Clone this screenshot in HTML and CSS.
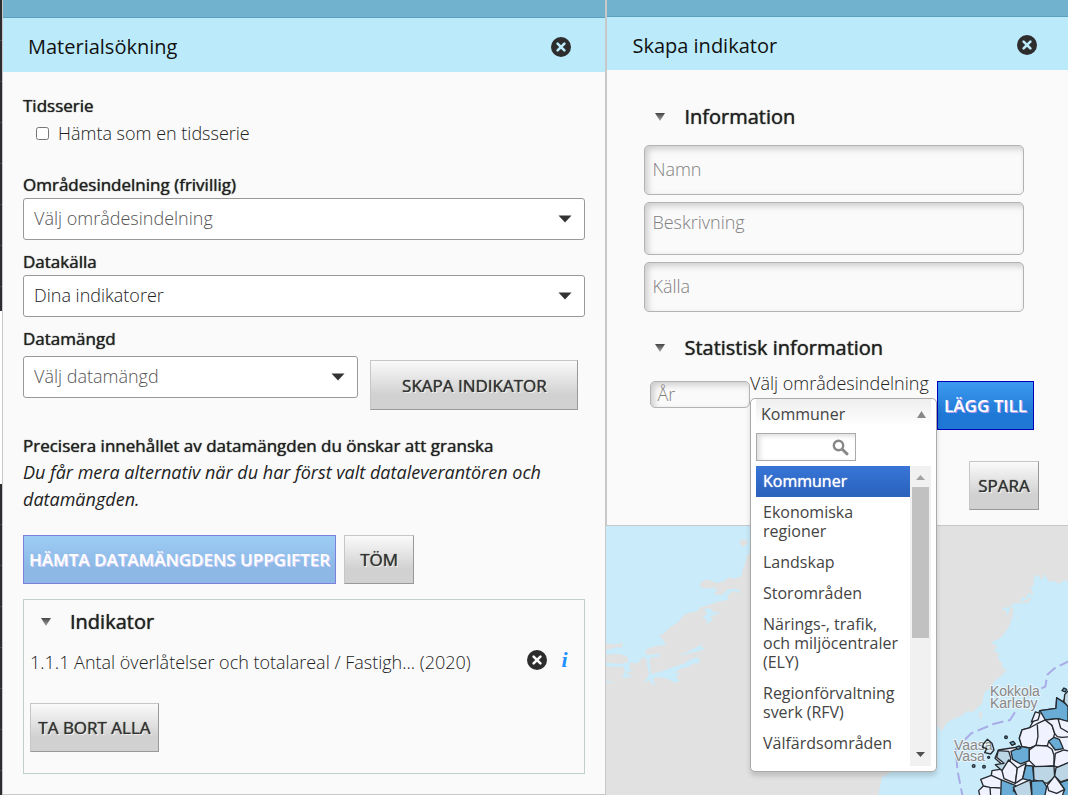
FILE: index.html
```html
<!DOCTYPE html>
<html lang="sv">
<head>
<meta charset="utf-8">
<title>Materialsökning</title>
<link rel="stylesheet" href="styles.css">
</head>
<body>
<svg class="defs" aria-hidden="true">
  <symbol id="close" viewBox="0 0 20 20"><circle cx="10" cy="10" r="10" fill="#2d2d2d"/><path d="M6.6 6.6l6.8 6.8M13.4 6.6l-6.8 6.8" stroke="currentColor" stroke-width="2.6" stroke-linecap="round"/></symbol>
  <symbol id="caret" viewBox="0 0 14 8"><path d="M0.5 0.5h13L7 7.5z" fill="#333"/></symbol>
  <linearGradient id="fade" x1="0" y1="0" x2="0" y2="1"><stop offset="0" stop-color="#444"/><stop offset="1" stop-color="#aaa"/></linearGradient>
  <symbol id="fold" viewBox="0 0 10 8"><path d="M0 0h10L5 8z" fill="url(#fade)"/></symbol>
</svg>
<div class="app">
  <div class="rail"><div class="rail-top"></div><div class="rail-gap"></div><div class="rail-bottom"></div></div>

  <section class="panel search">
    <div class="grip"></div>
    <header class="head">
      <h2 class="title">Materialsökning</h2>
      <button class="icon-btn" type="button" aria-label="Stäng"><svg class="close"><use href="#close"/></svg></button>
    </header>
    <div class="search-body">
      <div class="label">Tidsserie</div>
      <label class="check"><input type="checkbox">Hämta som en tidsserie</label>

      <label class="label" for="area">Områdesindelning (frivillig)</label>
      <div class="select-wrap">
        <select id="area" class="select muted"><option>Välj områdesindelning</option></select>
        <svg class="caret"><use href="#caret"/></svg>
      </div>
      <label class="label next" for="source">Datakälla</label>
      <div class="select-wrap">
        <select id="source" class="select"><option>Dina indikatorer</option></select>
        <svg class="caret"><use href="#caret"/></svg>
      </div>
      <label class="label next" for="dataset">Datamängd</label>
      <div class="dataset-row">
        <div class="select-wrap dataset">
          <select id="dataset" class="select muted"><option>Välj datamängd</option></select>
          <svg class="caret"><use href="#caret"/></svg>
        </div>
        <button class="btn create" type="button">SKAPA INDIKATOR</button>
      </div>

      <div class="label refine">Precisera innehållet av datamängden du önskar att granska</div>
      <p class="hint">Du får mera alternativ när du har först valt dataleverantören och datamängden.</p>
      <div class="actions">
        <button class="btn primary off" type="button" disabled>HÄMTA DATAMÄNGDENS UPPGIFTER</button>
        <button class="btn clear" type="button">TÖM</button>
      </div>

      <div class="result">
        <h3 class="fold-head"><button class="fold-btn" type="button"><svg class="fold"><use href="#fold"/></svg>Indikator</button></h3>
        <div class="result-row">
          <span class="result-name">1.1.1 Antal överlåtelser och totalareal / Fastigh... (2020)</span>
          <button class="icon-btn" type="button" aria-label="Ta bort"><svg class="close light"><use href="#close"/></svg></button>
          <button class="icon-btn info" type="button">i</button>
        </div>
        <button class="btn remove" type="button">TA BORT ALLA</button>
      </div>
    </div>
  </section>

  <div class="side">
    <section class="panel indicator">
      <div class="grip"></div>
      <header class="head">
        <h2 class="title">Skapa indikator</h2>
        <button class="icon-btn" type="button" aria-label="Stäng"><svg class="close"><use href="#close"/></svg></button>
      </header>
      <div class="indicator-body">
        <h3 class="fold-head"><button class="fold-btn" type="button"><svg class="fold"><use href="#fold"/></svg>Information</button></h3>
        <div class="fields">
          <input class="field" type="text" placeholder="Namn" aria-label="Namn">
          <textarea class="field area" placeholder="Beskrivning" aria-label="Beskrivning"></textarea>
          <input class="field" type="text" placeholder="Källa" aria-label="Källa">
        </div>
        <h3 class="fold-head"><button class="fold-btn" type="button"><svg class="fold"><use href="#fold"/></svg>Statistisk information</button></h3>
        <div class="stat-row">
          <input class="field year" type="text" placeholder="År" aria-label="År">
          <div class="combo">
            <div class="combo-label" id="combo-label">Välj områdesindelning</div>
            <div class="combo-anchor">
              <div class="drop">
                <button class="combo-btn" type="button" aria-labelledby="combo-label">Kommuner<svg class="up" viewBox="0 0 9 7"><path d="M4.500 0L9 7H0z" fill="#888"/></svg></button>
                <div class="find">
                  <input class="find-input" type="text" aria-label="Sök">
                  <svg class="lens" viewBox="0 0 17 17" fill="none" stroke="#888"><circle cx="6.500" cy="6.500" r="4.700" stroke-width="2.400"/><path d="M10.500 10.500l4.500 4.300" stroke-width="3" stroke-linecap="round"/></svg>
                </div>
                <div class="list">
                  <ul class="options">
                    <li class="option on">Kommuner</li>
                    <li class="option">Ekonomiska regioner</li>
                    <li class="option">Landskap</li>
                    <li class="option">Storområden</li>
                    <li class="option">Närings-, trafik, och miljöcentraler (ELY)</li>
                    <li class="option">Regionförvaltning<wbr>sverk (RFV)</li>
                    <li class="option">Välfärdsområden</li>
                  </ul>
                  <div class="scroll">
                    <svg class="tick" viewBox="0 0 9 5"><path d="M4.500 0L9 5H0z" fill="#a3a3a3"/></svg>
                    <div class="thumb"></div>
                    <svg class="tick" viewBox="0 0 9 5"><path d="M0 0h9L4.500 5z" fill="#505050"/></svg>
                  </div>
                </div>
              </div>
            </div>
          </div>
          <button class="btn primary" type="button">LÄGG TILL</button>
        </div>
        <div class="save-row"><button class="btn" type="button">SPARA</button></div>
      </div>
    </section>

    <div class="map">
      <svg class="map-svg" viewBox="606 526 462 269" preserveAspectRatio="xMinYMin slice">
        <rect x="606" y="526" width="462" height="269" fill="#e1e1e1"/>
        <!-- western sea and archipelago -->
        <g transform="translate(600 520) scale(.3333)" fill="#c9ebfa">
          <path d="M0 0H454V95L440 108 436 130 428 150 424 168 404 176 386 172 372 184 352 190 338 184 320 178 300 190 302 202 322 206 340 202 352 212 340 222 364 226 384 208 410 206 436 226 420 216 398 214 382 226 384 240 358 244 334 252 318 258 300 262 292 274 268 278 250 286 238 304 222 314 206 326 190 342 176 346 188 358 198 376 180 376 160 380 140 388 134 402 150 404 178 402 180 410 152 412 148 424 154 462 190 452 222 440 254 430 268 420 294 410 300 430 282 430 264 440 240 446 224 458 242 460 228 468 238 484 226 488 196 474 166 470 158 480 168 496 156 492 148 480 132 490 142 472 148 462 142 440 140 416 128 412 112 430 90 428 88 448 104 450 82 456 86 466 104 466 76 474 66 468 76 454 70 440 40 440 18 438V428L60 432 86 426 82 410 60 402 18 404V390L48 382 66 382 68 368 40 374 18 370Z"/>
          <path d="M228 406L256 400 280 386 300 376 308 366 302 378 314 386 300 392 270 400 250 404ZM312 268L330 264 340 276 362 278 344 284 328 292 340 298 318 314 322 302 308 290 322 282ZM18 484l30 3-30 2ZM338 238l20-6 26-2-20 12Z"/>
          <path d="M418 68l8-10 12 2 5 10-10 8-6 2Z" fill="#e1e1e1"/>
        </g>
        <!-- Gulf of Bothnia -->
        <g transform="translate(930 520) scale(.3333)" stroke-linejoin="round">
          <path fill="#c9ebfa" d="M420 186L404 180 386 192 372 182 358 186 342 162 336 180 322 164 312 172 310 196 302 204 312 226 296 218 288 234 274 232 272 248 246 252 240 262 214 264 228 272 232 290 246 294 238 318 222 342 206 358 184 366 202 380 192 394 206 400 204 416 216 428 218 444 230 450 212 470 196 480 180 504 162 520 158 548 146 560 126 578 114 572 88 590 62 600 46 614 36 634 22 618-30 690-96 740-126 762-144 772-156 830H420Z"/>
          <path d="M232 290l12-30 6 8-4 26M256 280l8 18M270 250l34-18-10 16M148 578l8-2-4 22-4-8Z" fill="#e1e1e1" stroke="#e1e1e1" stroke-width="2"/>
          <path d="M420 422L372 446 352 464 346 500 300 520 266 560 240 600 190 612 124 640 78 686 82 750 98 830" fill="none" stroke="#a9ace8" stroke-width="6" stroke-dasharray="34 14"/>
        </g>
        <g class="place">
          <text x="990" y="696">Kokkola</text><text x="990" y="708">Karleby</text>
          <text x="954" y="750">Vaasa</text><text x="954" y="761">Vasa</text>
        </g>
        <!-- municipalities shaded by class -->
        <g transform="translate(930 520) scale(.3333)" stroke="#252a2e" stroke-width="4" stroke-linejoin="round">
          <path fill="#f0f2ff" d="M420 504L400 545 380 535 378 565 330 572 318 592 305 612 298 624 276 630 268 655 276 680 245 684 205 690 195 715 212 730 210 748 186 752 184 766 152 778 160 798 146 812 150 830H420Z"/>
          <path fill="#69acd5" d="M330 572L378 565 380 533 396 544 414 556V606L384 596 346 600Z"/>
          <path fill="#bcd6e6" d="M420 506L404 524 402 546 420 566Z"/>
          <path fill="#f0f2ff" d="M298 624L320 612 346 600 366 616 374 640 370 656 356 664 352 678 318 676 300 684 276 680 268 655 276 630Z"/>
          <path fill="#f0f2ff" d="M346 600L384 596 420 606V650L396 652 382 650 374 640 366 616Z"/>
          <path fill="#69acd5" d="M356 664L372 652 388 658 400 686 376 690Z"/>
          <path fill="#69acd5" d="M243 694L276 680 298 684 298 722 272 732 248 718Z"/>
          <path fill="#f0f2ff" d="M298 690L318 676 352 678 366 688 372 706 372 738 318 742 298 722Z"/>
          <path fill="#f0f2ff" d="M376 700L402 690 420 694V726L384 742 372 738Z"/>
          <path fill="#bcd6e6" d="M205 692L236 694 243 716 230 740 216 752 196 734 222 730 200 712Z"/>
          <path fill="#f0f2ff" d="M236 720L262 744 256 790 222 776 216 752Z"/>
          <path fill="#f0f2ff" d="M262 744L288 730 278 776 256 790Z"/>
          <path fill="#69acd5" d="M288 736L308 738 312 784 292 780 278 776Z"/>
          <path fill="#bcd6e6" d="M310 740L372 738 374 772 352 790 312 780Z"/>
          <path fill="#bcd6e6" d="M378 744L420 726V776L392 786 374 768Z"/>
          <path fill="#69acd5" d="M214 780L256 796 250 812 272 830H212Z"/>
          <path fill="#bcd6e6" d="M250 802L300 780 306 830H262Z"/>
          <path fill="#69acd5" d="M304 784L338 782 350 800 344 830H306Z"/>
          <path fill="#f0f2ff" d="M352 796L374 768 404 808 380 820 356 812Z"/>
          <path fill="#69acd5" d="M390 788L420 778V830H396L404 808Z"/>
          <path fill="none" d="M184 766L214 780M160 798L180 802 212 804M180 802L182 830M322 614L324 650 318 676M384 596L392 624 420 640"/>
          <path fill="#f0f2ff" d="M304 606L316 576 330 580 324 600Z"/>
          <g fill="#69acd5"><circle cx="228" cy="652" r="4"/><circle cx="131" cy="738" r="4"/><circle cx="162" cy="740" r="4"/><circle cx="176" cy="712" r="3"/><path d="M396 512l6-8 8 4-4 8ZM240 668l10-4 6 8-10 4ZM258 682l10-4 4 8-10 2Z"/><path fill="none" d="M160 672l12-14 14 12 6 20-10 12-18-4 6-12-12-4Z"/></g>
        </g>
      </svg>
    </div>
  </div>
</div>
</body>
</html>
```
FILE: styles.css
```css
* { box-sizing: border-box; }
body { margin: 0; font: 300 18px/27px "Open Sans", "Noto Sans", sans-serif; color: #222; background: #fafafa; }
button, input, select, textarea { font: inherit; color: inherit; margin: 0; }
h2, h3, p, ul { margin: 0; padding: 0; font-weight: inherit; }
.defs { position: absolute; width: 0; height: 0; }
.app { display: flex; min-height: 100vh; }

.rail { flex: 0 0 3px; display: flex; flex-direction: column; border-right: 1px solid #c8c8c8; background: #fff; }
.rail-top, .rail-bottom { background: repeating-linear-gradient(#2c2d31 0 40px, #48494d 40px 41px); }
.rail-top, .rail-bottom { flex: 311; }
.rail-gap { flex: 172; }

.panel { background: #fafafa; }
.search { flex: 603 1 0; min-width: 0; border-right: 1px solid #c8c8c8; border-bottom: 1px solid #c8c8c8; }
.side { flex: 462 1 0; min-width: 0; display: flex; flex-direction: column; }
.indicator { border-left: 1px solid #c8c8c8; border-bottom: 1px solid #c8c8c8; }
.grip { height: 18px; background: #71b3ce; border-bottom: 1px solid #5a9fbe; }
.indicator .grip { height: 17px; }
.head { display: flex; align-items: center; justify-content: space-between; height: 54px; padding: 3px 34px 0 25px; background: #bbebfb; color: #bbebfb; }
.indicator .head { height: 53px; padding-right: 31px; }
.title { font-size: 20px; font-weight: 400; color: #111; }
.icon-btn { display: block; padding: 0; border: 0; background: none; color: inherit; }
.close { display: block; width: 20px; height: 20px; }
.close.light { color: #fafafa; }

.search-body { padding: 20px; }
.label { display: block; font-size: 17px; font-weight: 400; text-shadow: 0 0 1px #222; }
.label.next { margin-top: 8px; }
.check { display: flex; align-items: center; gap: 9px; height: 28px; margin: 0 0 24px 13px; }
.check input { width: 13px; height: 13px; }
.select-wrap { position: relative; }
.select { display: block; width: 100%; height: 42px; padding: 0 40px 1px 10px; border: 1px solid #999; border-radius: 3px; background: #fff; appearance: none; }
.select.muted { color: #555; }
.caret { position: absolute; right: 13px; top: 17px; width: 14px; height: 8px; pointer-events: none; }
.dataset-row { display: flex; gap: 12px; padding-right: 7px; }
.dataset { flex: 1; margin-top: 4px; }

.btn { height: 49px; padding: 0 6px; border: 1px solid #c6c6c6; border-right-color: #999; border-bottom-color: #999; border-radius: 0; background: linear-gradient(#fafafa, #d1d1d1 70%); color: #333; font-size: 17px; font-weight: 400; text-shadow: 0 0 1px #333, 1px 1px 0 #fff; white-space: nowrap; }
.create { width: 208px; height: 50px; margin-top: 8px; }
.remove { width: 129px; }
.primary { padding: 0 5px; border-color: #0000b8; background: linear-gradient(#3c9bf0, #1f78d5 70%); color: #fff; font-weight: 600; text-shadow: 1px 1px 0 #b8a0f0; }
.off { border-color: #7a80dc; background: linear-gradient(#9ccdf5, #8db7e5 70%); text-shadow: 1px 1px 0 #dcd6f8; }
.refine { margin-top: 22px; }
.hint { font-style: italic; font-weight: 400; }
.actions { display: flex; gap: 8px; margin: 22px 0 15px; }
.clear { width: 70px; }

.result { padding: 7px 15px 21px 6px; border: 1px solid #c0cfcc; }
.fold-head { font-size: 20px; line-height: 30px; }
.fold-btn { display: flex; align-items: center; gap: 19px; height: 30px; padding: 0 0 0 11px; border: 0; background: none; font-weight: 400; text-shadow: 0 0 1px #222; }
.fold { width: 10px; height: 8px; }
.result-row { display: flex; align-items: center; gap: 12px; height: 32px; margin: 9px 0 25px; }
.result-row .icon-btn { align-self: flex-start; margin-top: 4px; }
.result-name { flex: 1; }
.info { width: 10px; color: #1e90ff; font: italic bold 22px/20px "Liberation Serif", serif; }

.indicator-body { padding: 32px 29px 15px 37px; }
.fields { display: grid; gap: 7px; margin: 13px 15px 21px 0; }
.field { display: block; width: 100%; height: 50px; padding: 0 7px 2px; border: 1px solid #b3b3b3; border-radius: 5px; background: #fafafa; box-shadow: inset 3px 3px 6px #ccc; }
.field::placeholder { color: #808080; opacity: 1; }
.area { height: 53px; padding-top: 6px; resize: none; }
.stat-row { display: flex; align-items: flex-start; margin: 7px 5px 31px 6px; }
.year { flex: 1; min-width: 0; height: 27px; margin-top: 11px; padding: 0 6px; }
.stat-row .btn { flex: none; width: 97px; margin-top: 11px; }
.combo { flex: 0 0 187px; }
.combo-label { white-space: nowrap; }
.combo-anchor { position: relative; }
.drop { position: absolute; z-index: 2; top: 1px; left: 0; right: 0; padding: 0 5px 5px; border: 1px solid #aaa; border-radius: 5px; background: #fff; box-shadow: 0 4px 5px rgba(0, 0, 0, .15); color: #444; font-size: 16px; font-weight: 400; }
.combo-btn { display: flex; align-items: center; justify-content: space-between; width: 100%; height: 34px; padding: 0 5px 4px; border: 0; background: linear-gradient(#eee, #fff 80%); color: #444; font-weight: 400; }
.up { width: 9px; height: 7px; }
.find { position: relative; width: 100px; }
.find-input { display: block; width: 100%; height: 28px; padding: 0 24px 0 5px; border: 1px solid #aaa; background: #fff; box-shadow: inset 3px 2px 5px #ddd; }
.lens { position: absolute; right: 7px; top: 6px; width: 17px; height: 17px; }
.list { display: flex; height: 300px; margin-top: 5px; }
.options { flex: 1; list-style: none; overflow: hidden; }
.option { padding: 6px 7px; line-height: 19px; }
.option.on { background: linear-gradient(#3875d7, #2a62bc); color: #fff; text-shadow: 0 0 1px #fff; }
.scroll { flex: 0 0 21px; display: flex; flex-direction: column; align-items: center; padding: 9px 2px; background: #f1f1f1; }
.tick { flex: none; width: 9px; height: 5px; }
.thumb { width: 17px; height: 151px; margin: 7px 0 auto; background: #c1c1c1; }
.save-row { display: flex; justify-content: flex-end; }
.save-row .btn { width: 70px; }

.map { flex: 1; position: relative; min-height: 269px; background: #e1e1e1; }
.map-svg { display: block; width: 100%; height: 100%; }
.place { fill: #888; stroke: #e8f4fa; stroke-width: 2px; paint-order: stroke; font: 400 14px "Liberation Sans", sans-serif; }
```
